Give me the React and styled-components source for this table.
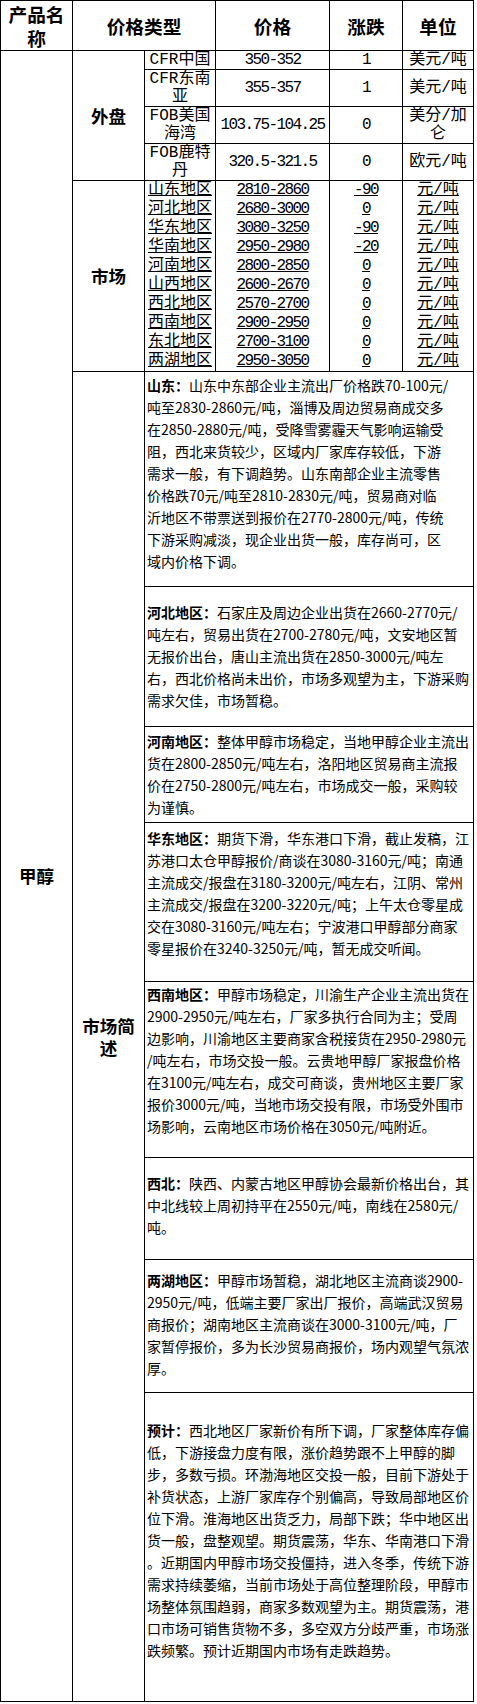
import styled, { createGlobalStyle } from "styled-components";

const GlobalStyle = createGlobalStyle`
  html, body {
    margin: 0;
    padding: 0;
    background: #fff;
  }
  body {
    font-family: "Noto Sans CJK SC", "Noto Sans", sans-serif;
    color: #000;
  }
`;

// 外盘 报价
const outerRows = [
  { type: "CFR中国", price: "350-352", change: "1", unit: "美元/吨" },
  { type: "CFR东南亚", price: "355-357", change: "1", unit: "美元/吨" },
  { type: "FOB美国海湾", price: "103.75-104.25", change: "0", unit: "美分/加仑" },
  { type: "FOB鹿特丹", price: "320.5-321.5", change: "0", unit: "欧元/吨" },
];

// 国内 市场
const marketRows = [
  { type: "山东地区", price: "2810-2860", change: "-90" },
  { type: "河北地区", price: "2680-3000", change: "0" },
  { type: "华东地区", price: "3080-3250", change: "-90" },
  { type: "华南地区", price: "2950-2980", change: "-20" },
  { type: "河南地区", price: "2800-2850", change: "0" },
  { type: "山西地区", price: "2600-2670", change: "0" },
  { type: "西北地区", price: "2570-2700", change: "0" },
  { type: "西南地区", price: "2900-2950", change: "0" },
  { type: "东北地区", price: "2700-3100", change: "0" },
  { type: "两湖地区", price: "2950-3050", change: "0" },
];

// 市场简述 (lines kept as in the original layout)
const notes = [
  {
    lead: "山东：",
    pt: 2, pb: 14,
    lines: [
      "山东中东部企业主流出厂价格跌70-100元/",
      "吨至2830-2860元/吨，淄博及周边贸易商成交多",
      "在2850-2880元/吨，受降雪雾霾天气影响运输受",
      "阻，西北来货较少，区域内厂家库存较低，下游",
      "需求一般，有下调趋势。山东南部企业主流零售",
      "价格跌70元/吨至2810-2830元/吨，贸易商对临",
      "沂地区不带票送到报价在2770-2800元/吨，传统",
      "下游采购减淡，现企业出货一般，库存尚可，区",
      "域内价格下调。",
    ],
  },
  {
    lead: "河北地区：",
    pt: 14, pb: 15,
    lines: [
      "石家庄及周边企业出货在2660-2770元/",
      "吨左右，贸易出货在2700-2780元/吨，文安地区暂",
      "无报价出台，唐山主流出货在2850-3000元/吨左",
      "右，西北价格尚未出价，市场多观望为主，下游采购",
      "需求欠佳，市场暂稳。",
    ],
  },
  {
    lead: "河南地区：",
    pt: 3, pb: 4,
    lines: [
      "整体甲醇市场稳定，当地甲醇企业主流出",
      "货在2800-2850元/吨左右，洛阳地区贸易商主流报",
      "价在2750-2800元/吨左右，市场成交一般，采购较",
      "为谨慎。",
    ],
  },
  {
    lead: "华东地区：",
    pt: 4, pb: 22,
    lines: [
      "期货下滑，华东港口下滑，截止发稿，江",
      "苏港口太仓甲醇报价/商谈在3080-3160元/吨；南通",
      "主流成交/报盘在3180-3200元/吨左右，江阴、常州",
      "主流成交/报盘在3200-3220元/吨；上午太仓零星成",
      "交在3080-3160元/吨左右；宁波港口甲醇部分商家",
      "零星报价在3240-3250元/吨，暂无成交听闻。",
    ],
  },
  {
    lead: "西南地区：",
    pt: 1, pb: 20,
    lines: [
      "甲醇市场稳定，川渝生产企业主流出货在",
      "2900-2950元/吨左右，厂家多执行合同为主；受周",
      "边影响，川渝地区主要商家含税接货在2950-2980元",
      "/吨左右，市场交投一般。云贵地甲醇厂家报盘价格",
      "在3100元/吨左右，成交可商谈，贵州地区主要厂家",
      "报价3000元/吨，当地市场交投有限，市场受外围市",
      "场影响，云南地区市场价格在3050元/吨附近。",
    ],
  },
  {
    lead: "西北：",
    pt: 14, pb: 21,
    lines: [
      "陕西、内蒙古地区甲醇协会最新价格出台，其",
      "中北线较上周初持平在2550元/吨，南线在2580元/",
      "吨。",
    ],
  },
  {
    lead: "两湖地区：",
    pt: 9, pb: 13,
    lines: [
      "甲醇市场暂稳，湖北地区主流商谈2900-",
      "2950元/吨，低端主要厂家出厂报价，高端武汉贸易",
      "商报价；湖南地区主流商谈在3000-3100元/吨，厂",
      "家暂停报价，多为长沙贸易商报价，场内观望气氛浓",
      "厚。",
    ],
  },
  {
    lead: "预计：",
    pt: 26, pb: 40,
    lines: [
      "西北地区厂家新价有所下调，厂家整体库存偏",
      "低，下游接盘力度有限，涨价趋势跟不上甲醇的脚",
      "步，多数亏损。环渤海地区交投一般，目前下游处于",
      "补货状态，上游厂家库存个别偏高，导致局部地区价",
      "位下滑。淮海地区出货乏力，局部下跌；华中地区出",
      "货一般，盘整观望。期货震荡，华东、华南港口下滑",
      "。近期国内甲醇市场交投僵持，进入冬季，传统下游",
      "需求持续萎缩，当前市场处于高位整理阶段，甲醇市",
      "场整体氛围趋弱，商家多数观望为主。期货震荡，港",
      "口市场可销售货物不多，多空双方分歧严重，市场涨",
      "跌频繁。预计近期国内市场有走跌趋势。",
    ],
  },
];

const widths = [72, 72, 71, 114, 73, 71];

const App = () => {
  const total = outerRows.length + marketRows.length + notes.length;

  return (
    <>
      <GlobalStyle />
      <Sheet>
        <colgroup>
          {widths.map((w, i) => (
            <Col key={i} $w={w} />
          ))}
        </colgroup>
        <thead>
          <tr>
            <HeadCell>产品名称</HeadCell>
            <HeadCell colSpan={2}>价格类型</HeadCell>
            <HeadCell>价格</HeadCell>
            <HeadCell>涨跌</HeadCell>
            <HeadCell>单位</HeadCell>
          </tr>
        </thead>
        <tbody>
          {outerRows.map((row, i) => (
            <tr key={row.type}>
              {i === 0 && <LabelCell rowSpan={total}>甲醇</LabelCell>}
              {i === 0 && <LabelCell rowSpan={outerRows.length}>外盘</LabelCell>}
              <DataCell>{row.type}</DataCell>
              <DataCell $mono>{row.price}</DataCell>
              <DataCell $mono>{row.change}</DataCell>
              <DataCell>{row.unit}</DataCell>
            </tr>
          ))}

          {marketRows.map((row, i) => (
            <tr key={row.type}>
              {i === 0 && <LabelCell rowSpan={marketRows.length}>市场</LabelCell>}
              <DataCell $flat><u>{row.type}</u></DataCell>
              <DataCell $flat $mono><u>{row.price}</u></DataCell>
              <DataCell $flat $mono><u>{row.change}</u></DataCell>
              <DataCell $flat><u>元/吨</u></DataCell>
            </tr>
          ))}

          {notes.map((note, i) => (
            <tr key={note.lead}>
              {i === 0 && <LabelCell rowSpan={notes.length}>市场简述</LabelCell>}
              <NoteCell colSpan={4} $pt={note.pt} $pb={note.pb}>
                {note.lines.map((line, j) => (
                  <Line key={j}>
                    {j === 0 && <Lead>{note.lead}</Lead>}
                    {line}
                  </Line>
                ))}
              </NoteCell>
            </tr>
          ))}
        </tbody>
      </Sheet>
    </>
  );
};

const Sheet = styled.table`
  width: 473px;
  border-collapse: collapse;
  table-layout: fixed;
  td, th {
    border: 1px solid #000;
    padding: 0;
  }
`;

const Col = styled.col`
  width: ${(p) => p.$w}px;
`;

const HeadCell = styled.th`
  height: 49px;
  font-size: 18.67px;
  line-height: 24px;
  font-weight: 700;
  text-align: center;
  vertical-align: middle;
`;

const LabelCell = styled.td`
  padding: 0 4px !important;
  font-size: 17.5px;
  line-height: 22px;
  font-weight: 700;
  text-align: center;
  vertical-align: middle;
`;

const DataCell = styled.td`
  font-family: "Liberation Mono", "Noto Sans CJK SC", monospace;
  font-size: 16px;
  line-height: ${(p) => (p.$flat ? "19px" : "18px")};
  text-align: center;
  vertical-align: middle;
  letter-spacing: ${(p) => (p.$mono ? "-1.6px" : "0")};
  ${(p) =>
    p.$flat &&
    `
    border-top: none !important;
    border-bottom: none !important;
  `}
  u {
    text-decoration: underline;
    text-underline-offset: 1px;
  }
`;

const NoteCell = styled.td`
  padding: ${(p) => p.$pt}px 0 ${(p) => p.$pb}px 2px !important;
  font-size: 14px;
  line-height: 22px;
  text-align: left;
  vertical-align: top;
`;

const Line = styled.span`
  display: block;
  white-space: nowrap;
`;

const Lead = styled.b`
  font-weight: 700;
`;

export default App;
